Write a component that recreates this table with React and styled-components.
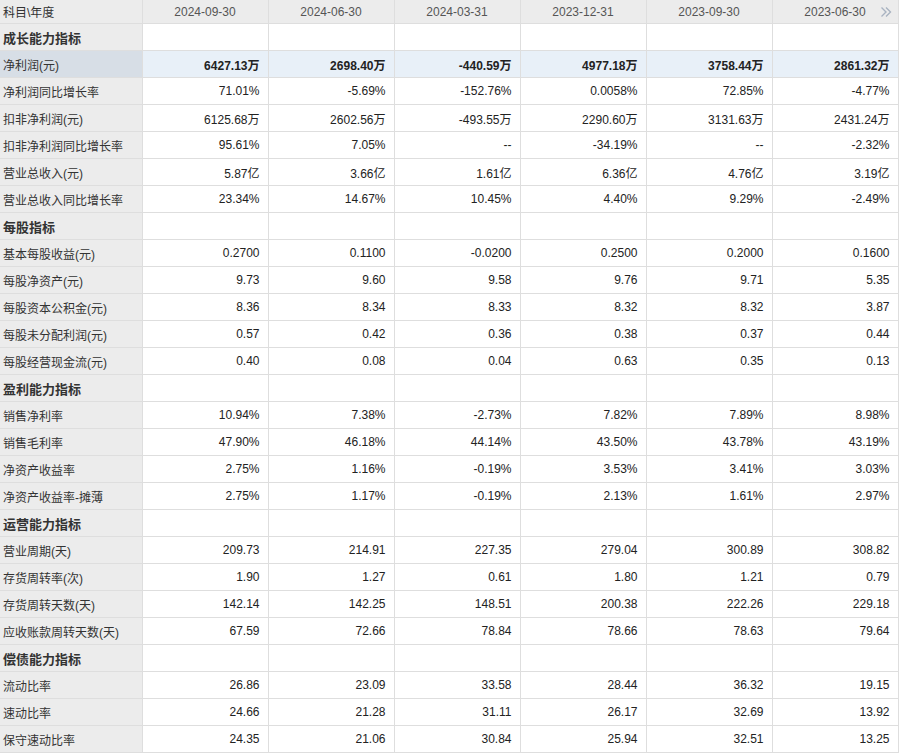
import React from "react";
import styled, { createGlobalStyle, css } from "styled-components";

const Global = createGlobalStyle`
  body {
    margin: 0;
    background: #fff;
    font-family: "Liberation Sans", "Noto Sans CJK SC", sans-serif;
    font-size: 12px;
    color: #333;
  }
`;

const Dates = ["2024-09-30", "2024-06-30", "2024-03-31", "2023-12-31", "2023-09-30", "2023-06-30"];

// 分组 + 行数据
const Grupos = [
  {
    Titulo: "成长能力指标",
    Filas: [
      ["净利润(元)", ["6427.13万", "2698.40万", "-440.59万", "4977.18万", "3758.44万", "2861.32万"], true],
      ["净利润同比增长率", ["71.01%", "-5.69%", "-152.76%", "0.0058%", "72.85%", "-4.77%"]],
      ["扣非净利润(元)", ["6125.68万", "2602.56万", "-493.55万", "2290.60万", "3131.63万", "2431.24万"]],
      ["扣非净利润同比增长率", ["95.61%", "7.05%", "--", "-34.19%", "--", "-2.32%"]],
      ["营业总收入(元)", ["5.87亿", "3.66亿", "1.61亿", "6.36亿", "4.76亿", "3.19亿"]],
      ["营业总收入同比增长率", ["23.34%", "14.67%", "10.45%", "4.40%", "9.29%", "-2.49%"]],
    ],
  },
  {
    Titulo: "每股指标",
    Filas: [
      ["基本每股收益(元)", ["0.2700", "0.1100", "-0.0200", "0.2500", "0.2000", "0.1600"]],
      ["每股净资产(元)", ["9.73", "9.60", "9.58", "9.76", "9.71", "5.35"]],
      ["每股资本公积金(元)", ["8.36", "8.34", "8.33", "8.32", "8.32", "3.87"]],
      ["每股未分配利润(元)", ["0.57", "0.42", "0.36", "0.38", "0.37", "0.44"]],
      ["每股经营现金流(元)", ["0.40", "0.08", "0.04", "0.63", "0.35", "0.13"]],
    ],
  },
  {
    Titulo: "盈利能力指标",
    Filas: [
      ["销售净利率", ["10.94%", "7.38%", "-2.73%", "7.82%", "7.89%", "8.98%"]],
      ["销售毛利率", ["47.90%", "46.18%", "44.14%", "43.50%", "43.78%", "43.19%"]],
      ["净资产收益率", ["2.75%", "1.16%", "-0.19%", "3.53%", "3.41%", "3.03%"]],
      ["净资产收益率-摊薄", ["2.75%", "1.17%", "-0.19%", "2.13%", "1.61%", "2.97%"]],
    ],
  },
  {
    Titulo: "运营能力指标",
    Filas: [
      ["营业周期(天)", ["209.73", "214.91", "227.35", "279.04", "300.89", "308.82"]],
      ["存货周转率(次)", ["1.90", "1.27", "0.61", "1.80", "1.21", "0.79"]],
      ["存货周转天数(天)", ["142.14", "142.25", "148.51", "200.38", "222.26", "229.18"]],
      ["应收账款周转天数(天)", ["67.59", "72.66", "78.84", "78.66", "78.63", "79.64"]],
    ],
  },
  {
    Titulo: "偿债能力指标",
    Filas: [
      ["流动比率", ["26.86", "23.09", "33.58", "28.44", "36.32", "19.15"]],
      ["速动比率", ["24.66", "21.28", "31.11", "26.17", "32.69", "13.92"]],
      ["保守速动比率", ["24.35", "21.06", "30.84", "25.94", "32.51", "13.25"]],
    ],
  },
];

const Chevron = () => (
  <Flecha width="12" height="12" viewBox="0 0 12 12" fill="none">
    <path d="M1.5 1.5 L6 6 L1.5 10.5 M6 1.5 L10.5 6 L6 10.5" stroke="#a9b3c1" strokeWidth="1.4" />
  </Flecha>
);

const App = () => {
  return (
    <>
      <Global />
      <Tabla>
        <colgroup>
          <col style={{ width: 142 }} />
          {Dates.map((d) => (
            <col key={d} style={{ width: 126 }} />
          ))}
        </colgroup>
        <thead>
          <tr>
            <Cabecera Izquierda>科目\年度</Cabecera>
            {Dates.map((d, i) => (
              <Cabecera key={d}>
                {d}
                {i === Dates.length - 1 && <Chevron />}
              </Cabecera>
            ))}
          </tr>
        </thead>
        <tbody>
          {Grupos.map((g) => (
            <React.Fragment key={g.Titulo}>
              <tr>
                <Nombre Seccion>{g.Titulo}</Nombre>
                {Dates.map((d) => (
                  <Valor key={d} />
                ))}
              </tr>
              {g.Filas.map(([nombre, valores, activo]) => (
                <tr key={nombre}>
                  <Nombre Activo={activo}>{nombre}</Nombre>
                  {valores.map((v, i) => (
                    <Valor key={i} Activo={activo}>
                      {v}
                    </Valor>
                  ))}
                </tr>
              ))}
            </React.Fragment>
          ))}
        </tbody>
      </Tabla>
    </>
  );
};

export default App;

const Borde = "#dedede";
const FondoGris = "#ececec";

const Tabla = styled.table`
  width: 898px;
  border-collapse: collapse;
  table-layout: fixed;
`;

const Cabecera = styled.th`
  position: relative;
  height: 23px;
  padding: 0;
  background: ${FondoGris};
  border: 1px solid ${Borde};
  border-top: none;
  font-weight: normal;
  color: #555;
  text-align: center;
  white-space: nowrap;

  ${(props) =>
    props.Izquierda &&
    css`
      text-align: left;
      padding-left: 3px;
      color: #333;
      border-left: none;
    `}
`;

const Flecha = styled.svg`
  position: absolute;
  right: 6px;
  top: 6px;
`;

const Nombre = styled.td`
  height: 26px;
  padding: 0 0 0 3px;
  background: ${FondoGris};
  border: 1px solid ${Borde};
  border-left: none;
  white-space: nowrap;
  color: #333;

  ${(props) =>
    props.Seccion &&
    css`
      font-weight: bold;
      font-size: 13px;
      color: #333;
    `}

  ${(props) =>
    props.Activo &&
    css`
      background: #d7dee6;
    `}
`;

const Valor = styled.td`
  height: 26px;
  padding: 0 8px 0 0;
  border: 1px solid ${Borde};
  text-align: right;
  white-space: nowrap;
  color: #222;

  ${(props) =>
    props.Activo &&
    css`
      background: #e8f0f8;
      font-weight: bold;
    `}
`;
